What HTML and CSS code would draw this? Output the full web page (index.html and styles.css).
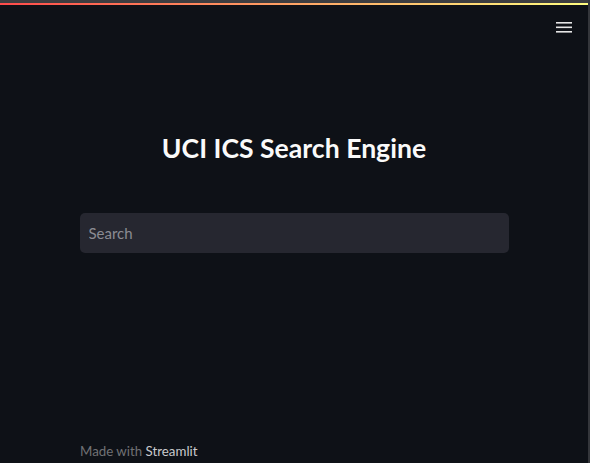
FILE: index.html
```html
<!DOCTYPE html>
<html>
<head>
<meta charset="utf-8">
<link rel="stylesheet" href="styles.css">
</head>
<body>
<div class="app">
  <div class="topline"></div>
  <div class="decoration"></div>
  <header class="header">
    <button class="menu" aria-label="menu">
      <svg width="16" height="12" viewBox="0 0 16 12"><rect x="0" y="1" width="16" height="1.6" fill="#e6e6e6"/><rect x="0" y="5.5" width="16" height="1.6" fill="#e6e6e6"/><rect x="0" y="10" width="16" height="1.6" fill="#e6e6e6"/></svg>
    </button>
  </header>
  <main class="main">
    <h1 class="title">UCI ICS Search Engine</h1>
    <div class="search"><input class="search-input" type="text" placeholder="Search"></div>
  </main>
  <footer class="footer">Made with <span class="brand">Streamlit</span></footer>
</div>
</body>
</html>
```
FILE: styles.css
```css
html, body {
  margin: 0;
  padding: 0;
  height: 100%;
  background: #0e1117;
  overflow: hidden;
}
.app {
  height: 463px;
  display: flex;
  flex-direction: column;
  font-family: "Lato", "Noto Sans", sans-serif;
  border-right: 2px solid #34363b;
  box-sizing: border-box;
}
.topline {
  height: 3px;
  background: #3d3d40;
  flex: none;
}
.decoration {
  height: 2px;
  flex: none;
  background: linear-gradient(90deg, #ff4b4b, #fffd80);
}
.header {
  display: flex;
  justify-content: flex-end;
  padding: 16px 16px 0 0;
  height: 30px;
  box-sizing: border-box;
  flex: none;
}
.menu {
  background: none;
  border: 0;
  padding: 0;
  width: 16px;
  height: 12px;
  display: flex;
}
.main {
  flex: 1;
  width: 429px;
  margin: 0 auto;
  padding-top: 95px;
  box-sizing: content-box;
}
.title {
  margin: 0;
  text-align: center;
  color: #fafafa;
  font-size: 26.6px;
  font-weight: 700;
  line-height: 36px;
}
.search {
  margin-top: 47px;
}
.search-input {
  width: 100%;
  height: 40px;
  box-sizing: border-box;
  background: #262730;
  border: 0;
  border-radius: 5px;
  padding: 0 9px;
  font-family: "Lato", "Noto Sans", sans-serif;
  font-size: 15px;
  color: #fafafa;
  outline: none;
}
.search-input::placeholder {
  color: #8b8c93;
}
.footer {
  flex: none;
  padding: 0 0 3px 80px;
  font-size: 13.3px;
  line-height: 18px;
  color: #717175;
}
.brand {
  color: #c9cacd;
}
```
